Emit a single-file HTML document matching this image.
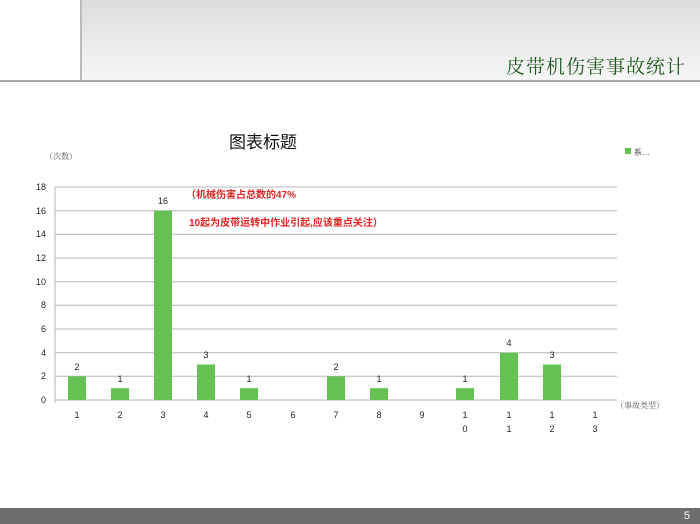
<!DOCTYPE html>
<html><head><meta charset="utf-8"><style>
body{margin:0;width:700px;height:524px;background:#fff;position:relative;overflow:hidden;font-family:"Liberation Sans","Noto Sans CJK SC",sans-serif}
.hdr{position:absolute;left:80px;top:0;width:620px;height:80px;background:linear-gradient(#dcdcdc,#f6f6f6);border-left:2px solid #bbb}
.line{position:absolute;left:0;top:80px;width:700px;height:2px;background:#a8a8a8}
.ttl{position:absolute;right:14px;top:52px;font-size:19px;color:#1f5a1f;font-family:"Noto Serif CJK SC",serif;letter-spacing:1px}
.foot{position:absolute;left:0;top:508px;width:700px;height:16px;background:#6e6e6e;color:#fff;font-size:11px}
</style></head><body>
<div class="hdr"></div><div class="line"></div>
<div class="ttl">皮带机伤害事故统计</div>
<svg width="700" height="524" style="position:absolute;left:0;top:0" font-family="Liberation Sans,Noto Sans CJK SC,sans-serif">
<text x="263" y="148" font-size="17" text-anchor="middle" fill="#111">图表标题</text>
<text x="45" y="159" font-size="8" fill="#555" font-family="Noto Serif CJK SC,serif">（次数）</text>
<rect x="625" y="148" width="6" height="6" fill="#66c155"/>
<text x="634" y="155" font-size="8" fill="#444">系…</text>
<g stroke="#b5b5b5" stroke-width="1">
<line x1="55" x2="617" y1="187" y2="187"/><line x1="55" x2="617" y1="210.7" y2="210.7"/><line x1="55" x2="617" y1="234.3" y2="234.3"/><line x1="55" x2="617" y1="258" y2="258"/><line x1="55" x2="617" y1="281.7" y2="281.7"/><line x1="55" x2="617" y1="305.3" y2="305.3"/><line x1="55" x2="617" y1="329" y2="329"/><line x1="55" x2="617" y1="352.7" y2="352.7"/><line x1="55" x2="617" y1="376.3" y2="376.3"/><line x1="55" x2="617" y1="400" y2="400"/><line x1="55" x2="55" y1="187" y2="403"/>
</g>
<g font-size="9" fill="#222" text-anchor="end">
<text x="46" y="190">18</text><text x="46" y="214">16</text><text x="46" y="237">14</text><text x="46" y="261">12</text><text x="46" y="285">10</text><text x="46" y="308">8</text><text x="46" y="332">6</text><text x="46" y="356">4</text><text x="46" y="379">2</text><text x="46" y="403">0</text>
</g>
<g fill="#66c155">
<rect x="68" y="376.3" width="18" height="23.7"/><rect x="111" y="388.2" width="18" height="11.8"/><rect x="154" y="210.7" width="18" height="189.3"/><rect x="197" y="364.5" width="18" height="35.5"/><rect x="240" y="388.2" width="18" height="11.8"/><rect x="327" y="376.3" width="18" height="23.7"/><rect x="370" y="388.2" width="18" height="11.8"/><rect x="456" y="388.2" width="18" height="11.8"/><rect x="500" y="352.7" width="18" height="47.3"/><rect x="543" y="364.5" width="18" height="35.5"/>
</g>
<g font-size="9" fill="#222" text-anchor="middle">
<text x="77" y="370">2</text><text x="120" y="382">1</text><text x="163" y="204">16</text><text x="206" y="358">3</text><text x="249" y="382">1</text><text x="336" y="370">2</text><text x="379" y="382">1</text><text x="465" y="382">1</text><text x="509" y="346">4</text><text x="552" y="358">3</text>
<text x="77" y="418">1</text><text x="120" y="418">2</text><text x="163" y="418">3</text><text x="206" y="418">4</text><text x="249" y="418">5</text><text x="293" y="418">6</text><text x="336" y="418">7</text><text x="379" y="418">8</text><text x="422" y="418">9</text>
<text x="465" y="418">1</text><text x="465" y="432">0</text><text x="509" y="418">1</text><text x="509" y="432">1</text><text x="552" y="418">1</text><text x="552" y="432">2</text><text x="595" y="418">1</text><text x="595" y="432">3</text>
</g>
<text x="616" y="408" font-size="8" fill="#555" font-family="Noto Serif CJK SC,serif">（事故类型）</text>
<g font-size="10" fill="#e02424" font-weight="bold">
<text x="186" y="198">（机械伤害占总数的47%</text>
<text x="189" y="226">10起为皮带运转中作业引起,应该重点关注）</text>
</g>
</svg>
<div class="foot"><span style="position:absolute;right:10px;top:2px">5</span></div>
</body></html>
